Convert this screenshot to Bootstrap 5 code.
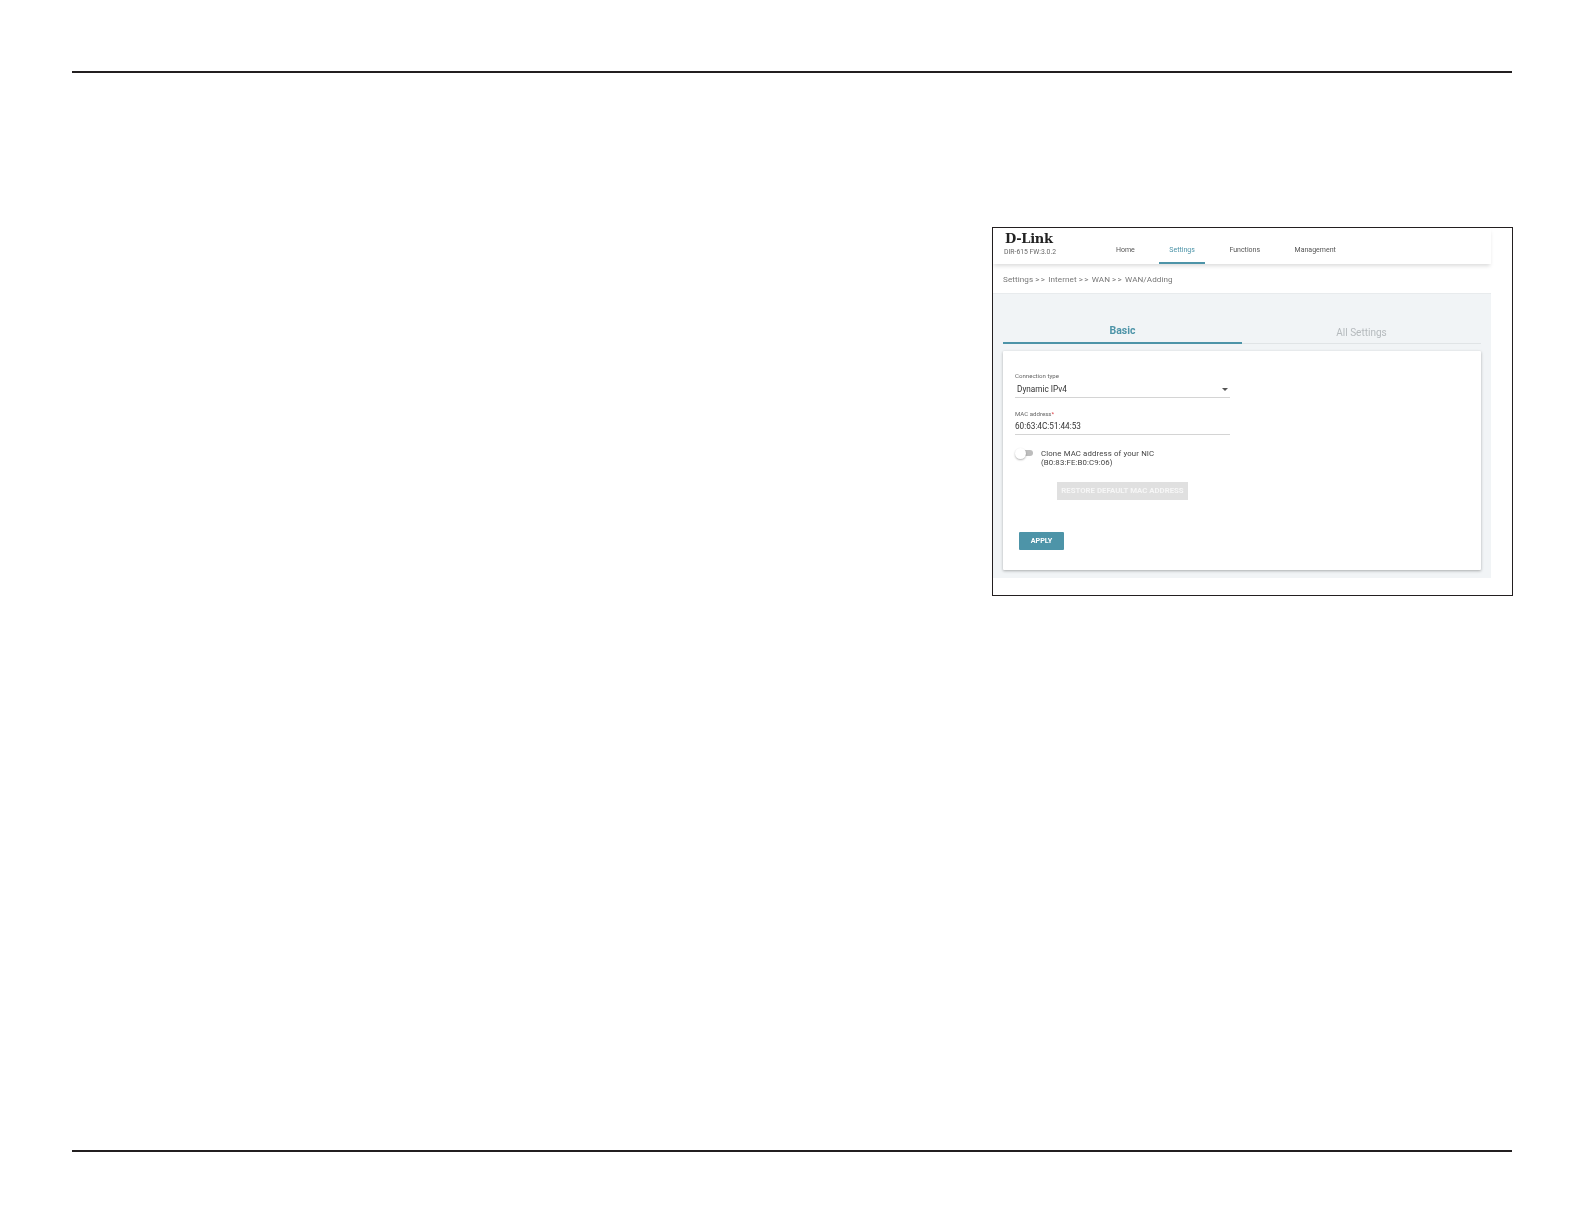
<!DOCTYPE html>
<html lang="en">
<head>
<meta charset="utf-8">
<title>D-Link WAN</title>
<link href="https://cdn.jsdelivr.net/npm/bootstrap@5.3.0/dist/css/bootstrap.min.css" rel="stylesheet">
<style>
html,body{margin:0;background:#fff;}
body{font-family:Roboto,"Liberation Sans",sans-serif;color:#444;}
.sheet{height:1224px;padding:71px 72px 72px;}
.rule-line{height:2px;background:#231f20;flex:none;}
.shot-row{margin-top:154px;}
.shot{width:521px;height:369px;border:1px solid #231f20;background:#fff;margin-right:-1px;}
.shot-inner{width:498px;height:100%;padding-bottom:17px;filter:blur(.3px);}
.topbar{height:36px;padding-left:11px;box-shadow:0 3px 4px -1px rgba(0,0,0,.14);position:relative;flex:none;}
.brand-box{width:102px;}
.logo-word{font-family:"DejaVu Serif",serif;font-weight:700;font-size:13px;line-height:12px;height:12px;margin-top:5px;margin-left:1px;color:#222;letter-spacing:-.3px;}
.fw-text{font-size:6.8px;line-height:9px;margin-top:3px;color:#666;}
.top-link{display:block;height:36px;padding:18px 10px 0;margin-right:14.5px;text-align:center;font-size:7px;line-height:8px;color:#555;text-decoration:none;white-space:nowrap;}
.top-link.on{color:#4d94a8;border-bottom:2px solid #4d94a8;}
.crumbs{height:30px;flex:none;padding:8px 0 0 10px;font-size:8.1px;line-height:14px;color:#777;border-bottom:1px solid #e8ebed;letter-spacing:.08px;}
.crumbs i{font-style:normal;letter-spacing:1.2px;}
.panel{flex:1;background:#f1f4f6;padding:0 10px 7px 10px;min-height:0;}
.tab-strip{height:50px;flex:none;}
.tab-one{width:50%;text-align:center;font-size:10.5px;padding-top:30px;line-height:13px;}
.tab-one.on{color:#4d94a8;font-weight:700;border-bottom:2px solid #4d94a8;height:50px;}
.tab-one.off{color:#b5babd;font-size:10px;border-bottom:1px solid #e0e4e6;height:50px;padding-top:32px;}
.form-sheet{margin-top:7px;height:219px;border:0;border-radius:1px;box-shadow:0 1px 3px rgba(0,0,0,.3);padding:0 12px;background:#fff;}
.field-box{width:215px;border-bottom:1px solid #d4d4d4;}
.field-cap{font-size:6.1px;line-height:7px;color:#666;padding-top:21px;}
.field-cap.second{padding-top:11.5px;}
.field-cap b{color:#d9343a;font-weight:400;}
.field-val{font-size:8.2px;line-height:12px;height:18px;padding-top:4px;color:#333;}
.field-val.second{height:17px;padding-top:3px;}
.caret-tri{width:0;height:0;border-left:3px solid transparent;border-right:3px solid transparent;border-top:3px solid #555;margin-right:2px;margin-top:5px;}
.switch-row{margin-top:13px;}
.switch-track{width:19px;height:12px;position:relative;flex:none;margin-right:7px;}
.switch-track::before{content:"";position:absolute;left:3px;top:2px;width:15px;height:6px;border-radius:3px;background:#bdbdbd;}
.switch-track::after{content:"";position:absolute;left:0;top:0;width:11px;height:11px;border-radius:50%;background:#fff;box-shadow:0 1px 2px rgba(0,0,0,.3);}
.switch-text{font-size:7.8px;line-height:9px;color:#444;letter-spacing:.14px;padding-top:1px;}
.restore-btn{display:block;margin:15px 0 0 42px;width:131px;height:18px;padding:0;border:0;border-radius:0;background:#e0e0e0;color:#f6f6f6;font-size:7.8px;font-weight:700;line-height:18px;white-space:nowrap;}
.apply-btn{display:block;margin:32px 0 0 4px;width:45px;height:18px;padding:0;border:0;border-radius:1px;background:#4d94a8;color:#fff;font-size:7.2px;font-weight:700;line-height:17px;}
.restore-btn:disabled{background:#e0e0e0;color:#f6f6f6;opacity:1;}
</style>
</head>
<body>
<div class="sheet d-flex flex-column">
  <div class="rule-line"></div>
  <div class="shot-row d-flex justify-content-end">
    <div class="shot">
      <div class="shot-inner d-flex flex-column">
        <div class="topbar d-flex">
          <div class="brand-box">
            <div class="logo-word">D-Link</div>
            <div class="fw-text">DIR-615 FW:3.0.2</div>
          </div>
          <nav class="d-flex">
            <a class="top-link" href="#">Home</a>
            <a class="top-link on" href="#">Settings</a>
            <a class="top-link" href="#">Functions</a>
            <a class="top-link" href="#">Management</a>
          </nav>
        </div>
        <div class="crumbs">Settings <i>&gt;&gt;</i> Internet <i>&gt;&gt;</i> WAN <i>&gt;&gt;</i> WAN/Adding</div>
        <div class="panel d-flex flex-column">
          <div class="tab-strip d-flex">
            <div class="tab-one on">Basic</div>
            <div class="tab-one off">All Settings</div>
          </div>
          <div class="card form-sheet">
            <div class="field-box">
              <div class="field-cap">Connection type</div>
              <div class="field-val d-flex justify-content-between align-items-start"><span>&nbsp;Dynamic IPv4</span><span class="caret-tri"></span></div>
            </div>
            <div class="field-box">
              <div class="field-cap second">MAC address<b>*</b></div>
              <div class="field-val second">60:63:4C:51:44:53</div>
            </div>
            <div class="switch-row d-flex">
              <span class="switch-track"></span>
              <div class="switch-text">Clone MAC address of your NIC<br>(B0:83:FE:B0:C9:06)</div>
            </div>
            <button class="btn restore-btn" disabled>RESTORE DEFAULT MAC ADDRESS</button>
            <button class="btn apply-btn">APPLY</button>
          </div>
        </div>
      </div>
    </div>
  </div>
  <div class="rule-line mt-auto"></div>
</div>
</body>
</html>
